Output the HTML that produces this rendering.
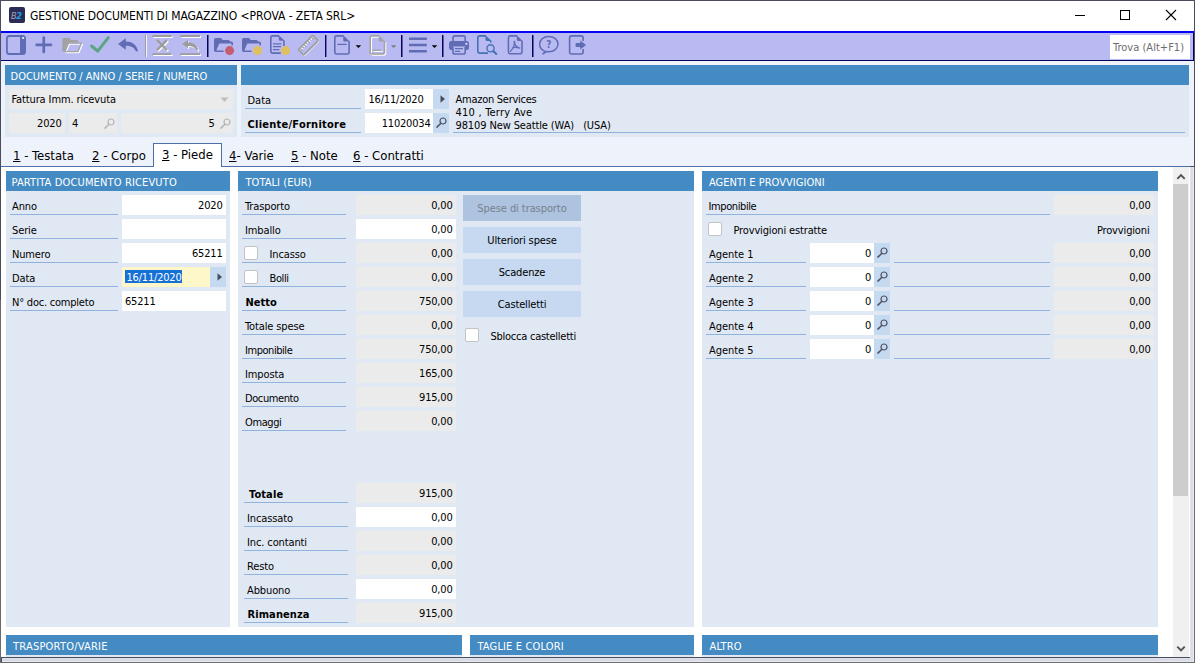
<!DOCTYPE html><html lang="it"><head><meta charset="utf-8"><title>GESTIONE DOCUMENTI DI MAGAZZINO</title><style>
*{box-sizing:border-box;margin:0;padding:0}
html,body{width:1195px;height:663px;overflow:hidden;background:#fff}
body{position:relative;font-family:"DejaVu Sans Condensed","DejaVu Sans","Liberation Sans",sans-serif;font-stretch:condensed;font-size:11px;color:#000;line-height:1}
.a{position:absolute}
.t{position:absolute;white-space:pre;line-height:14px;height:14px;margin-top:1px}
.r{text-align:right}
.c{text-align:center}
.b{font-weight:bold}
.hd{position:absolute;background:#448bc3;color:#fff;height:20px}
.hd span{position:absolute;left:5.5px;top:5px;line-height:13px;white-space:pre}
.pn{position:absolute;background:#e0e8f3}
.g{position:absolute;background:#ebebeb;height:20px}
.w{position:absolute;background:#fff;height:20px}
.u{position:absolute;height:1px;background:#90b3dd}
.bt{position:absolute;background:#c5d9f1;height:20px}
.btn{position:absolute;background:#c6d9f1;height:26px;width:118px;left:463px;text-align:center;line-height:27px;white-space:pre}
.cb{position:absolute;width:14px;height:14px;background:#fff;border:1px solid #c3c3c3;border-radius:2px}
.n{letter-spacing:-0.2px}
.tab{position:absolute;font-size:13px;line-height:16px;top:148px;white-space:pre}
.tab u{text-decoration:underline;text-underline-offset:1px}
svg{position:absolute;overflow:visible}
</style></head><body>
<div class="a" style="left:0;top:0;width:1195px;height:663px;background:#4a4c60"></div>
<div class="a" style="left:1px;top:1px;width:1193px;height:30px;background:#fff"></div>
<div class="a" style="left:9px;top:7px;width:16px;height:16px;background:#2c2b55;border-radius:2px"></div>
<div class="t" style="left:11px;top:9px;font-size:9px;line-height:12px;height:12px;font-style:italic;color:#a9a9bd;letter-spacing:-0.400px">B<span style="color:#22a0e2;font-weight:bold">2</span></div>
<div class="t" style="left:30px;top:8px;font-size:12px;line-height:15px;height:15px;letter-spacing:-0.09px">GESTIONE DOCUMENTI DI MAGAZZINO &lt;PROVA - ZETA SRL&gt;</div>
<svg style="left:1070px;top:5px" width="120" height="22" viewBox="1070 5 120 22"><path d="M1075 15.5h10" stroke="#000" stroke-width="1" fill="none"/><rect x="1120.5" y="10.5" width="9" height="9" stroke="#000" stroke-width="1" fill="none"/><path d="M1166 10l10 10M1176 10l-10 10" stroke="#000" stroke-width="1.1" fill="none"/></svg>
<div class="a" style="left:1px;top:31px;width:1193px;height:2px;background:#0404f6"></div>
<div class="a" style="left:1px;top:33px;width:1193px;height:27px;background:#babaf2"></div>
<div class="a" style="left:1px;top:60px;width:1193px;height:1px;background:#04045e"></div>
<div class="a" style="left:1193px;top:33px;width:1px;height:28px;background:#04045e"></div>
<div class="a" style="left:1110px;top:35px;width:80px;height:24px;background:#fff"></div>
<div class="t" style="left:1113px;top:40px;color:#6d6d6d;letter-spacing:0.020px">Trova (Alt+F1)</div>
<div class="a" style="left:1px;top:61px;width:1193px;height:105px;background:#eef2fa"></div>
<div class="a" style="left:1px;top:166px;width:1189px;height:491px;background:#fff"></div>
<svg style="left:0;top:33px" width="620" height="27" viewBox="0 33 620 27" fill="none">
<g stroke-linejoin="round">
<!-- 1 panel -->
<rect x="6.9" y="36" width="18.2" height="18" rx="2.6" stroke="#606db4" stroke-width="1.8"/>
<path d="M20 36h2.6a2.6 2.6 0 0 1 2.6 2.6v12.8a2.6 2.6 0 0 1-2.6 2.6H20z" fill="#606db4"/>
<rect x="22.2" y="37" width="1.9" height="1.9" fill="#e8e8fb"/>
<!-- 2 plus -->
<path d="M36.6 44.8h14.4M43.8 37.6v14.4" stroke="#606db4" stroke-width="2.7" stroke-linecap="round"/>
<!-- 3 folder disabled -->
<g transform="translate(1 1)"><path d="M68.3 43.2h13l-3.4 8.4h-13z" stroke="#fff" stroke-width="1.3"/></g>
<path d="M62.3 39.6q0-1.6 1.6-1.6h4.6q1 0 1.6 0.8l0.9 1.2h5.6q1.6 0 1.6 1.6v1h-10.2l-3.6 9h-0.6q-1.5 0-1.5-1.6z" fill="#a2a2a2"/>
<path d="M68.3 43.2h13l-3.4 8.4h-13z" stroke="#a2a2a2" stroke-width="1.3"/>
<!-- 4 check -->
<path d="M91.6 46l6.1 5.2l10.6-13.6" stroke="#5aa584" stroke-width="3" stroke-linecap="round"/>
<!-- 5 undo -->
<path d="M118 44l7.8-5.8v3.4c6.2 0 10.6 3.4 12 8.6c0.3 1.4-1.6 2-2.2 0.6c-1.8-3.6-4.8-5-9.8-5v4z" fill="#606db4"/>
<!-- sep1 -->
<rect x="145" y="35" width="1" height="22" fill="#9c9c9c"/><rect x="146" y="35" width="1" height="22" fill="#f4f4fb"/>
<!-- 6 delete row disabled -->
<g transform="translate(1 1)" stroke="#fff"><path d="M152.4 36h19.2M152.4 54.2h19.2" stroke-width="1.8"/><path d="M157.6 40.7l8.8 8.8M166.4 40.7l-8.8 8.8" stroke-width="2.4" stroke-linecap="round"/></g>
<g stroke="#9c9c9c"><path d="M152.4 36h19.2M152.4 54.2h19.2" stroke-width="1.8"/><path d="M157.6 40.7l8.8 8.8M166.4 40.7l-8.8 8.8" stroke-width="2.4" stroke-linecap="round"/></g>
<!-- 7 undo row disabled -->
<g transform="translate(1 1)"><path d="M180.2 36h19.8M180.2 54.2h19.8" stroke="#fff" stroke-width="1.8"/><path d="M182 44l6-3.9v2.3c5.200 0 8.800 2.600 10.100 7c0.200 1.100-1.300 1.600-1.800 0.500c-1.500-2.900-4.100-4-8.300-4v2.600z" fill="#fff"/></g>
<path d="M180.2 36h19.800M180.200 54.200h19.800" stroke="#9c9c9c" stroke-width="1.800"/><path d="M182 44l6-3.900v2.300c5.200 0 8.800 2.600 10.100 7c0.200 1.100-1.300 1.600-1.800 0.500c-1.500-2.900-4.100-4-8.300-4v2.600z" fill="#9c9c9c"/>
<!-- sep2 -->
<rect x="207" y="35" width="1.5" height="22" fill="#04045e"/>
<!-- 8 folder red -->
<path d="M214 39.7q0-1.7 1.7-1.7h4.5q1 0 1.6 .8l.9 1.2h5.7q1.6 0 1.6 1.6h1.4q1.6 0 1.6 1.6v2.4h-1.6v-2.2h-12.1l-3 7.2h7.3v1.4h-7.9q-1.7 0-1.7-1.7z" fill="#606db4"/>
<circle cx="229.600" cy="50.600" r="4.500" fill="#c65c6f"/>
<!-- 9 folder yellow -->
<path transform="translate(28 0)" d="M214 39.7q0-1.7 1.7-1.7h4.5q1 0 1.6 .8l.9 1.2h5.7q1.6 0 1.6 1.6h1.4q1.6 0 1.6 1.6v2.4h-1.6v-2.2h-12.1l-3 7.2h7.3v1.4h-7.9q-1.7 0-1.7-1.7z" fill="#606db4"/>
<circle cx="257.500" cy="50.600" r="4.500" fill="#dfbf5e"/>
<!-- 10 doc yellow -->
<path d="M279 35.900h-6.200q-2 0-2 2v13.200q0 2 2 2h8" stroke="#606db4" stroke-width="1.600"/>
<path d="M283.900 46v-5.400" stroke="#606db4" stroke-width="1.600"/>
<path d="M278.800 35.200l5.900 5.600h-4.300q-1.600 0-1.600-1.600z" fill="#606db4"/>
<path d="M273 43.800h8.400M273 46.700h8M273 49.600h6.400" stroke="#606db4" stroke-width="1.300"/>
<circle cx="285.600" cy="50.600" r="4.500" fill="#dfbf5e"/>
<!-- 11 ruler disabled -->
<g transform="translate(308.9 45.800) rotate(-45)"><rect x="-10.3" y="-3.800" width="20.600" height="7.600" rx="1" stroke="#fff" stroke-width="1.300"/></g>
<g transform="translate(308.3 45.200) rotate(-45)"><rect x="-10.3" y="-3.800" width="20.600" height="7.600" rx="1" stroke="#9c9c9c" stroke-width="1.700"/><path d="M-7.800 -3v2.800M-5.200 -3v1.800M-2.600 -3v2.800M0 -3v1.800M2.600 -3v2.800M5.200 -3v1.800M7.800 -3v2.800" stroke="#9c9c9c" stroke-width="1.200"/><path d="M-6.500 -2.800v2.200M-3.900 -2.800v1.600M-1.300 -2.800v2.200M1.300 -2.800v1.600M3.900 -2.800v2.200M6.500 -2.800v1.600" stroke="#f4f4fb" stroke-width="1.100"/></g>
<!-- sep3 -->
<rect x="325" y="35" width="1.400" height="22" fill="#04045e"/>
<!-- 12 doc minus -->
<path d="M343.600 35.900h-6.800q-2 0-2 2v14.100q0 2 2 2h10.300q2 0 2-2v-10.800" stroke="#606db4" stroke-width="1.600"/>
<path d="M343.200 35.200l6.600 6.300h-5q-1.600 0-1.600-1.600z" fill="#606db4"/>
<path d="M337.300 44.400h9.300" stroke="#606db4" stroke-width="1.300"/>
<path d="M355.600 45.200h5.600l-2.800 2.900z" fill="#000"/>
<!-- 13 doc disabled -->
<g transform="translate(1 1)"><path d="M379 35.900h-6.800q-2 0-2 2v14.100q0 2 2 2h10.300q2 0 2-2v-10.800" stroke="#fff" stroke-width="1.600"/><path d="M372.600 50.300h9" stroke="#fff" stroke-width="1.300"/></g>
<path d="M379 35.900h-6.800q-2 0-2 2v14.100q0 2 2 2h10.300q2 0 2-2v-10.800" stroke="#a2a2a2" stroke-width="1.600"/>
<path d="M378.600 35.200l6.600 6.300h-5q-1.600 0-1.600-1.600z" fill="#a2a2a2"/>
<path d="M372.600 50.300h9" stroke="#a2a2a2" stroke-width="1.300"/>
<path d="M390.900 45.200h5.400l-2.700 2.900z" fill="#7c7c7c"/>
<!-- sep4 -->
<rect x="401" y="35" width="1.500" height="22" fill="#04045e"/>
<!-- 14 hamburger -->
<path d="M409 38.800h17.800M409 45h17.800M409 51.300h17.800" stroke="#606db4" stroke-width="2.500"/>
<path d="M431.700 45.200h5.600l-2.800 2.900z" fill="#000"/>
<!-- sep5 -->
<rect x="442" y="35" width="1.500" height="22" fill="#04045e"/>
<!-- 15 printer -->
<path d="M453 41.500v-3.600q0-2 2-2h8.200q2 0 2 2v3.600" stroke="#606db4" stroke-width="1.600"/>
<path d="M451.200 41h15.600q2.200 0 2.200 2.200v4.600q0 2.200-2.200 2.200h-1.600v-3.400h-12.400v3.400h-1.600q-2.200 0-2.200-2.200v-4.600q0-2.200 2.200-2.200z" fill="#606db4"/>
<path d="M453 47v5.200q0 1.800 1.800 1.800h8.600q1.800 0 1.800-1.800v-5.200" stroke="#606db4" stroke-width="1.600"/>
<path d="M455 48.700h8M455 51.300h5.200" stroke="#606db4" stroke-width="1.200"/>
<rect x="465.500" y="42.900" width="1.800" height="1.800" fill="#e8e8fb"/>
<!-- 16 preview -->
<path d="M486 35.900h-6.200q-2 0-2 2v13.200q0 2 2 2h8.200" stroke="#4572b3" stroke-width="1.600"/>
<path d="M490.700 42.600v-2.200" stroke="#4572b3" stroke-width="1.600"/>
<path d="M485.500 35.200l6 5.800h-4.400q-1.600 0-1.600-1.600z" fill="#4572b3"/>
<circle cx="490.500" cy="48.300" r="3.600" stroke="#4572b3" stroke-width="1.400"/>
<path d="M493.200 51l3.100 3" stroke="#4572b3" stroke-width="2.100" stroke-linecap="round"/>
<!-- 17 pdf -->
<path d="M517.200 35.900h-6.800q-2 0-2 2v13.900q0 2 2 2h9.600q2 0 2-2v-10.800" stroke="#606db4" stroke-width="1.600"/>
<path d="M516.800 35.200l6 5.800h-4.400q-1.600 0-1.600-1.600z" fill="#606db4"/>
<path d="M514.400 41.600c0.300 3-1.200 7-4 9.700M514.400 41.600c0.200 2.800 2 5.600 5.300 6.500M512.300 47.800c2.600-0.600 5.200-0.400 7.400 0.300" stroke="#606db4" stroke-width="1.300" stroke-linecap="round"/>
<circle cx="514.400" cy="41.700" r="0.900" fill="#606db4"/>
<!-- sep6 -->
<rect x="532" y="35" width="1.500" height="22" fill="#04045e"/>
<!-- 18 help -->
<path d="M545.200 51.400c-3.400-1.200-5.600-4-5.600-7.300c0-4.400 4.100-7.700 9.200-7.700s9.200 3.300 9.200 7.700s-4.100 7.600-9.200 7.600c-0.800 0-1.500-0.100-2.200-0.200l-3.800 2.400z" stroke="#606db4" stroke-width="1.500"/>
<!-- 19 exit -->
<path d="M583.100 41v-3.100q0-2-2-2h-9.500q-2 0-2 2v14.100q0 2 2 2h9.500q2 0 2-2v-3.100" stroke="#606db4" stroke-width="1.600"/>
<path d="M575.600 43.100h4.600v-2.500l5.900 4.400l-5.900 4.400v-2.500h-4.600z" fill="#606db4"/>
</g>
<text x="548.900" y="47.600" font-family='"DejaVu Sans","Liberation Sans",sans-serif' font-weight="bold" font-size="10" fill="#606db4" text-anchor="middle">?</text>
</svg>

<div class="pn" style="left:5px;top:65px;width:232px;height:72px"></div>
<div class="hd" style="left:5px;top:65px;width:232px"><span style="left:5.500px;letter-spacing:0.010px">DOCUMENTO / ANNO / SERIE / NUMERO</span></div>
<div class="g" style="left:9px;top:89px;width:224px"></div>
<div class="t" style="left:11.5px;top:92px;letter-spacing:-0.12px">Fattura Imm. ricevuta</div>
<svg style="left:220px;top:97px" width="10" height="6"><path d="M0.5 0.5h8l-4 4.5z" fill="#bdbdbd"/></svg>
<div class="g" style="left:9px;top:113px;width:56px"></div>
<div class="g" style="left:69px;top:113px;width:48px"></div>
<div class="g" style="left:121px;top:113px;width:112px"></div>
<svg style="left:103px;top:116.5px" width="13" height="13" viewBox="-8 -5 13 13" fill="none"><circle cx="0" cy="0" r="3" stroke="#b4b4b8" stroke-width="1.2"/><path d="M-2.100 2.200L-6.100 6.100" stroke="#b4b4b8" stroke-width="1.5" stroke-linecap="round"/></svg>
<svg style="left:219px;top:116.5px" width="13" height="13" viewBox="-8 -5 13 13" fill="none"><circle cx="0" cy="0" r="3" stroke="#b4b4b8" stroke-width="1.2"/><path d="M-2.100 2.200L-6.100 6.100" stroke="#b4b4b8" stroke-width="1.5" stroke-linecap="round"/></svg>
<div class="t r n" style="left:9px;top:116px;width:52.5px">2020</div>
<div class="t n" style="left:72px;top:116px">4</div>
<div class="t r n" style="left:121px;top:116px;width:93.5px">5</div>
<div class="pn" style="left:241px;top:65px;width:948px;height:72px"></div>
<div class="hd" style="left:241px;top:65px;width:948px"></div>
<div class="t" style="left:247.5px;top:93px">Data</div>
<div class="u" style="left:245px;top:108px;width:116px"></div>
<div class="t b" style="left:247.5px;top:117px;letter-spacing:0.250px">Cliente/Fornitore</div>
<div class="u" style="left:245px;top:132px;width:116px"></div>
<div class="w" style="left:365px;top:89px;width:68px"></div>
<div class="bt" style="left:433px;top:89px;width:16px"></div>
<div class="w" style="left:365px;top:113px;width:68px"></div>
<div class="bt" style="left:433px;top:113px;width:16px"></div>
<div class="t n" style="left:368.5px;top:92px">16/11/2020</div>
<div class="t r n" style="left:365px;top:116px;width:65.5px">11020034</div>
<svg style="left:434.5px;top:116.4px" width="13" height="13" viewBox="-8 -5 13 13" fill="none"><circle cx="0" cy="0" r="3" stroke="#4d5363" stroke-width="1.2"/><path d="M-2.100 2.200L-6.100 6.100" stroke="#4d5363" stroke-width="1.5" stroke-linecap="round"/></svg>
<svg style="left:439.500px;top:94.600px" width="6" height="8"><path d="M0.5 0.3l4.5 3.7l-4.5 3.7z" fill="#4b4f5c"/></svg>
<div class="t" style="left:455.5px;top:92px;letter-spacing:-0.260px">Amazon Services</div>
<div class="t" style="left:455.5px;top:105px;letter-spacing:0.220px">410 , Terry Ave</div>
<div class="t" style="left:455.5px;top:118px;letter-spacing:-0.12px">98109 New Seattle (WA)   (USA)</div>
<div class="u" style="left:453px;top:132px;width:732px"></div>
<div class="a" style="left:1px;top:166px;width:1189px;height:1px;background:#4c6ea9"></div>
<div class="a" style="left:153px;top:143px;width:69px;height:24px;background:#fff;border:1px solid #4c6ea9;border-bottom:none"></div>
<div class="tab" style="left:13px;top:148px"><u>1</u> - Testata</div>
<div class="tab" style="left:92px;top:148px"><u>2</u> - Corpo</div>
<div class="tab" style="left:162px;top:147px"><u>3</u> - Piede</div>
<div class="tab" style="left:229px;top:148px"><u>4</u>- Varie</div>
<div class="tab" style="left:291px;top:148px"><u>5</u> - Note</div>
<div class="tab" style="left:353px;top:148px"><u>6</u> - Contratti</div>
<div class="pn" style="left:6px;top:171px;width:224px;height:456px"></div>
<div class="hd" style="left:6px;top:171px;width:224px"><span style="left:5.500px;letter-spacing:0.140px">PARTITA DOCUMENTO RICEVUTO</span></div>
<div class="t" style="left:12px;top:199px;letter-spacing:-0.12px">Anno</div>
<div class="u" style="left:10px;top:214px;width:108px"></div>
<div class="w" style="left:122px;top:195px;width:104px"></div>
<div class="t r n" style="left:122px;top:198px;width:100.5px">2020</div>
<div class="t" style="left:12px;top:223px;letter-spacing:-0.12px">Serie</div>
<div class="u" style="left:10px;top:238px;width:108px"></div>
<div class="w" style="left:122px;top:219px;width:104px"></div>
<div class="t" style="left:12px;top:247px;letter-spacing:-0.15px">Numero</div>
<div class="u" style="left:10px;top:262px;width:108px"></div>
<div class="w" style="left:122px;top:243px;width:104px"></div>
<div class="t r n" style="left:122px;top:246px;width:100.5px">65211</div>
<div class="t" style="left:12px;top:271px;letter-spacing:-0.12px">Data</div>
<div class="u" style="left:10px;top:286px;width:108px"></div>
<div class="a" style="left:122px;top:267px;width:88px;height:20px;background:#fdf7c9"></div>
<div class="bt" style="left:210px;top:267px;width:16px"></div>
<div class="a" style="left:125px;top:270px;width:57px;height:13px;background:#1670d6"></div>
<div class="t n" style="left:126.500px;top:270px;color:#fff">16/11/2020</div>
<svg style="left:217px;top:272.7px" width="6" height="8"><path d="M0.5 0.3l4.5 3.7l-4.5 3.7z" fill="#4b4f5c"/></svg>
<div class="t" style="left:12px;top:295px;letter-spacing:-0.22px">N° doc. completo</div>
<div class="u" style="left:10px;top:310px;width:108px"></div>
<div class="w" style="left:122px;top:291px;width:104px"></div>
<div class="t n" style="left:125px;top:294px">65211</div>
<div class="pn" style="left:238px;top:171px;width:456px;height:456px"></div>
<div class="hd" style="left:238px;top:171px;width:456px"><span style="left:7.500px;letter-spacing:0.060px">TOTALI (EUR)</span></div>
<div class="t" style="left:245px;top:199px;letter-spacing:-0.12px">Trasporto</div>
<div class="u" style="left:242px;top:214px;width:104px"></div>
<div class="g" style="left:356px;top:195px;width:100px"></div>
<div class="t r n" style="left:356px;top:198px;width:96.5px">0,00</div>
<div class="t" style="left:245px;top:223px;letter-spacing:-0.12px">Imballo</div>
<div class="u" style="left:242px;top:238px;width:104px"></div>
<div class="w" style="left:356px;top:219px;width:100px"></div>
<div class="t r n" style="left:356px;top:222px;width:96.5px">0,00</div>
<div class="t" style="left:269.5px;top:247px;letter-spacing:-0.12px">Incasso</div>
<div class="u" style="left:242px;top:262px;width:104px"></div>
<div class="g" style="left:356px;top:243px;width:100px"></div>
<div class="t r n" style="left:356px;top:246px;width:96.5px">0,00</div>
<div class="cb" style="left:244px;top:246px"></div>
<div class="t" style="left:269.5px;top:271px;letter-spacing:-0.4px">Bolli</div>
<div class="u" style="left:242px;top:286px;width:104px"></div>
<div class="g" style="left:356px;top:267px;width:100px"></div>
<div class="t r n" style="left:356px;top:270px;width:96.5px">0,00</div>
<div class="cb" style="left:244px;top:270px"></div>
<div class="t b" style="left:245.5px;top:295px;letter-spacing:0.0px">Netto</div>
<div class="u" style="left:242px;top:310px;width:104px"></div>
<div class="g" style="left:356px;top:291px;width:100px"></div>
<div class="t r n" style="left:356px;top:294px;width:96.5px">750,00</div>
<div class="t" style="left:245px;top:319px;letter-spacing:-0.12px">Totale spese</div>
<div class="u" style="left:242px;top:334px;width:104px"></div>
<div class="g" style="left:356px;top:315px;width:100px"></div>
<div class="t r n" style="left:356px;top:318px;width:96.5px">0,00</div>
<div class="t" style="left:245px;top:343px;letter-spacing:-0.45px">Imponibile</div>
<div class="u" style="left:242px;top:358px;width:104px"></div>
<div class="g" style="left:356px;top:339px;width:100px"></div>
<div class="t r n" style="left:356px;top:342px;width:96.5px">750,00</div>
<div class="t" style="left:245px;top:367px;letter-spacing:-0.12px">Imposta</div>
<div class="u" style="left:242px;top:382px;width:104px"></div>
<div class="g" style="left:356px;top:363px;width:100px"></div>
<div class="t r n" style="left:356px;top:366px;width:96.5px">165,00</div>
<div class="t" style="left:245px;top:391px;letter-spacing:-0.4px">Documento</div>
<div class="u" style="left:242px;top:406px;width:104px"></div>
<div class="g" style="left:356px;top:387px;width:100px"></div>
<div class="t r n" style="left:356px;top:390px;width:96.5px">915,00</div>
<div class="t" style="left:245px;top:415px;letter-spacing:-0.4px">Omaggi</div>
<div class="u" style="left:242px;top:430px;width:104px"></div>
<div class="g" style="left:356px;top:411px;width:100px"></div>
<div class="t r n" style="left:356px;top:414px;width:96.5px">0,00</div>
<div class="t b" style="left:249px;top:487px;letter-spacing:0.1px">Totale</div>
<div class="u" style="left:244px;top:502px;width:104px"></div>
<div class="g" style="left:356px;top:483px;width:100px"></div>
<div class="t r n" style="left:356px;top:486px;width:96.5px">915,00</div>
<div class="t" style="left:247px;top:511px;letter-spacing:-0.12px">Incassato</div>
<div class="u" style="left:244px;top:526px;width:104px"></div>
<div class="w" style="left:356px;top:507px;width:100px"></div>
<div class="t r n" style="left:356px;top:510px;width:96.5px">0,00</div>
<div class="t" style="left:247px;top:535px;letter-spacing:-0.12px">Inc. contanti</div>
<div class="u" style="left:244px;top:550px;width:104px"></div>
<div class="g" style="left:356px;top:531px;width:100px"></div>
<div class="t r n" style="left:356px;top:534px;width:96.5px">0,00</div>
<div class="t" style="left:247px;top:559px;letter-spacing:-0.12px">Resto</div>
<div class="u" style="left:244px;top:574px;width:104px"></div>
<div class="g" style="left:356px;top:555px;width:100px"></div>
<div class="t r n" style="left:356px;top:558px;width:96.5px">0,00</div>
<div class="t" style="left:247px;top:583px;letter-spacing:-0.12px">Abbuono</div>
<div class="u" style="left:244px;top:598px;width:104px"></div>
<div class="w" style="left:356px;top:579px;width:100px"></div>
<div class="t r n" style="left:356px;top:582px;width:96.5px">0,00</div>
<div class="t b" style="left:247.5px;top:607px;letter-spacing:0.1px">Rimanenza</div>
<div class="u" style="left:244px;top:622px;width:104px"></div>
<div class="g" style="left:356px;top:603px;width:100px"></div>
<div class="t r n" style="left:356px;top:606px;width:96.5px">915,00</div>
<div class="btn" style="top:195px;background:#adc3df;color:#77828f;letter-spacing:-0.080px">Spese di trasporto</div>
<div class="btn" style="top:227px;letter-spacing:-0.15px">Ulteriori spese</div>
<div class="btn" style="top:259px;letter-spacing:-0.15px">Scadenze</div>
<div class="btn" style="top:291px;letter-spacing:-0.15px">Castelletti</div>
<div class="cb" style="left:465px;top:328px"></div>
<div class="t" style="left:490.5px;top:329px;letter-spacing:-0.250px">Sblocca castelletti</div>
<div class="pn" style="left:702px;top:171px;width:456px;height:456px"></div>
<div class="hd" style="left:702px;top:171px;width:456px"><span style="left:7px;letter-spacing:0.030px">AGENTI E PROVVIGIONI</span></div>
<div class="t" style="left:708.500px;top:199px;letter-spacing:-0.400px">Imponibile</div>
<div class="u" style="left:706px;top:214px;width:344px"></div>
<div class="g" style="left:1054px;top:195px;width:100px"></div>
<div class="t r n" style="left:1054px;top:198px;width:96.5px">0,00</div>
<div class="cb" style="left:708px;top:222px"></div>
<div class="t" style="left:733.5px;top:223px;letter-spacing:-0.15px">Provvigioni estratte</div>
<div class="t r" style="left:1054px;top:223px;width:95.5px;letter-spacing:-0.15px">Provvigioni</div>
<div class="t" style="left:709px;top:247px;letter-spacing:-0.050px">Agente 1</div>
<div class="u" style="left:706px;top:262px;width:100px"></div>
<div class="w" style="left:810px;top:243px;width:64px"></div>
<div class="bt" style="left:874px;top:243px;width:16px"></div>
<div class="t r n" style="left:810px;top:246px;width:61px">0</div>
<svg style="left:875.5px;top:246.4px" width="13" height="13" viewBox="-8 -5 13 13" fill="none"><circle cx="0" cy="0" r="3" stroke="#4d5363" stroke-width="1.2"/><path d="M-2.100 2.200L-6.100 6.100" stroke="#4d5363" stroke-width="1.5" stroke-linecap="round"/></svg>
<div class="u" style="left:894px;top:262px;width:156px"></div>
<div class="g" style="left:1054px;top:243px;width:100px"></div>
<div class="t r n" style="left:1054px;top:246px;width:96.5px">0,00</div>
<div class="t" style="left:709px;top:271px;letter-spacing:-0.050px">Agente 2</div>
<div class="u" style="left:706px;top:286px;width:100px"></div>
<div class="w" style="left:810px;top:267px;width:64px"></div>
<div class="bt" style="left:874px;top:267px;width:16px"></div>
<div class="t r n" style="left:810px;top:270px;width:61px">0</div>
<svg style="left:875.5px;top:270.4px" width="13" height="13" viewBox="-8 -5 13 13" fill="none"><circle cx="0" cy="0" r="3" stroke="#4d5363" stroke-width="1.2"/><path d="M-2.100 2.200L-6.100 6.100" stroke="#4d5363" stroke-width="1.5" stroke-linecap="round"/></svg>
<div class="u" style="left:894px;top:286px;width:156px"></div>
<div class="g" style="left:1054px;top:267px;width:100px"></div>
<div class="t r n" style="left:1054px;top:270px;width:96.5px">0,00</div>
<div class="t" style="left:709px;top:295px;letter-spacing:-0.050px">Agente 3</div>
<div class="u" style="left:706px;top:310px;width:100px"></div>
<div class="w" style="left:810px;top:291px;width:64px"></div>
<div class="bt" style="left:874px;top:291px;width:16px"></div>
<div class="t r n" style="left:810px;top:294px;width:61px">0</div>
<svg style="left:875.5px;top:294.4px" width="13" height="13" viewBox="-8 -5 13 13" fill="none"><circle cx="0" cy="0" r="3" stroke="#4d5363" stroke-width="1.2"/><path d="M-2.100 2.200L-6.100 6.100" stroke="#4d5363" stroke-width="1.5" stroke-linecap="round"/></svg>
<div class="u" style="left:894px;top:310px;width:156px"></div>
<div class="g" style="left:1054px;top:291px;width:100px"></div>
<div class="t r n" style="left:1054px;top:294px;width:96.5px">0,00</div>
<div class="t" style="left:709px;top:319px;letter-spacing:-0.050px">Agente 4</div>
<div class="u" style="left:706px;top:334px;width:100px"></div>
<div class="w" style="left:810px;top:315px;width:64px"></div>
<div class="bt" style="left:874px;top:315px;width:16px"></div>
<div class="t r n" style="left:810px;top:318px;width:61px">0</div>
<svg style="left:875.5px;top:318.4px" width="13" height="13" viewBox="-8 -5 13 13" fill="none"><circle cx="0" cy="0" r="3" stroke="#4d5363" stroke-width="1.2"/><path d="M-2.100 2.200L-6.100 6.100" stroke="#4d5363" stroke-width="1.5" stroke-linecap="round"/></svg>
<div class="u" style="left:894px;top:334px;width:156px"></div>
<div class="g" style="left:1054px;top:315px;width:100px"></div>
<div class="t r n" style="left:1054px;top:318px;width:96.5px">0,00</div>
<div class="t" style="left:709px;top:343px;letter-spacing:-0.050px">Agente 5</div>
<div class="u" style="left:706px;top:358px;width:100px"></div>
<div class="w" style="left:810px;top:339px;width:64px"></div>
<div class="bt" style="left:874px;top:339px;width:16px"></div>
<div class="t r n" style="left:810px;top:342px;width:61px">0</div>
<svg style="left:875.5px;top:342.4px" width="13" height="13" viewBox="-8 -5 13 13" fill="none"><circle cx="0" cy="0" r="3" stroke="#4d5363" stroke-width="1.2"/><path d="M-2.100 2.200L-6.100 6.100" stroke="#4d5363" stroke-width="1.5" stroke-linecap="round"/></svg>
<div class="u" style="left:894px;top:358px;width:156px"></div>
<div class="g" style="left:1054px;top:339px;width:100px"></div>
<div class="t r n" style="left:1054px;top:342px;width:96.5px">0,00</div>
<div class="hd" style="left:6px;top:635px;width:456px"><span style="left:7px;letter-spacing:0.220px">TRASPORTO/VARIE</span></div>
<div class="hd" style="left:470px;top:635px;width:224px"><span style="left:7.500px;letter-spacing:0.150px">TAGLIE E COLORI</span></div>
<div class="hd" style="left:702px;top:635px;width:456px"><span style="left:7.500px;letter-spacing:0.150px">ALTRO</span></div>
<div class="a" style="left:6px;top:655px;width:456px;height:2px;background:#e0e8f3"></div>
<div class="a" style="left:470px;top:655px;width:224px;height:2px;background:#e0e8f3"></div>
<div class="a" style="left:702px;top:655px;width:456px;height:2px;background:#e0e8f3"></div>
<div class="a" style="left:1173px;top:167px;width:16px;height:490px;background:#f0f0f0"></div>
<div class="a" style="left:1173px;top:184px;width:15px;height:312px;background:#cdcdcd"></div>
<svg style="left:1173px;top:167px" width="17" height="490"><path d="M4.300 11.800l3.700-3.700l3.700 3.700" stroke="#505050" stroke-width="1.900" fill="none"/><path d="M4.300 479.600l3.700 3.700l3.700-3.700" stroke="#505050" stroke-width="1.900" fill="none"/></svg>
<div class="a" style="left:2px;top:658px;width:1192px;height:4px;background:linear-gradient(180deg,#e4e6ee,#d5d8e1 45%,#dfe1ea 80%,#f4f5fa)"></div>
<div class="a" style="left:1190px;top:167px;width:4px;height:495px;background:linear-gradient(90deg,#e2e4ec,#d8dbe4 45%,#e2e4ec 80%,#f2f3f8)"></div>
<div class="a" style="left:0;top:662px;width:1195px;height:1px;background:#6e6e6e"></div>
<div class="a" style="left:1194px;top:167px;width:1px;height:496px;background:#6e6e6e"></div>
<div class="a" style="left:0;top:300px;width:1px;height:363px;background:#6a6a6a"></div>
</body></html>
